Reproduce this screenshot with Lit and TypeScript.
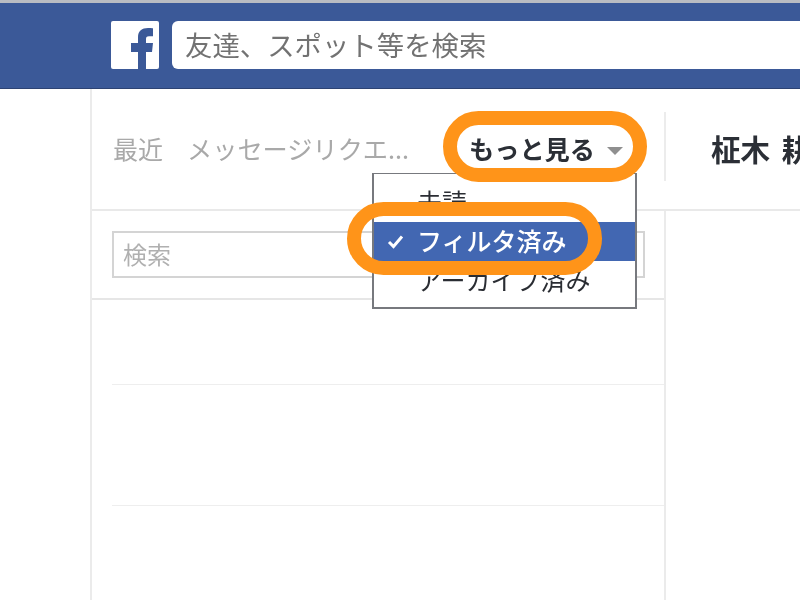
import { LitElement, html, css } from "lit";
import { customElement } from "lit/decorators.js";

@customElement("app-root")
export class AppRoot extends LitElement {
  static styles = css`
    :host {
      display: block;
      position: relative;
      width: 800px;
      height: 600px;
      overflow: hidden;
      background: #fff;
      font-family: "Noto Sans CJK JP", "Liberation Sans", sans-serif;
      font-size: 25px;
    }
    .page { display: flex; flex-direction: column; height: 600px; filter: blur(0.6px); }
    .topbar {
      box-sizing: border-box;
      height: 89px;
      flex: none;
      background: #3b5998;
      border-top: 3px solid #b9bcc2;
      border-bottom: 1px solid #2d4373;
      padding: 18px 0 0 111px;
      display: flex;
      gap: 13px;
      align-items: flex-start;
    }
    .logo {
      width: 48px;
      height: 48px;
      flex: none;
      background: #fff;
      border-radius: 2px;
      display: block;
    }
    .search {
      box-sizing: border-box;
      flex: 1;
      height: 48px;
      margin-right: -10px;
      background: #fff;
      border-radius: 6px 0 0 6px;
      padding-left: 13px;
      font-size: 27.4px;
      line-height: 46px;
      color: #727272;
      white-space: nowrap;
    }
    .main { flex: 1; display: flex; padding-left: 90px; min-height: 0; }
    .list {
      width: 576px;
      flex: none;
      box-sizing: border-box;
      border-left: 2px solid #ebebeb;
      border-right: 2px solid #ebebeb;
      display: flex;
      flex-direction: column;
    }
    .tabs {
      box-sizing: border-box;
      height: 122px;
      flex: none;
      margin-right: -2px;
      border-bottom: 2px solid #e9e9e9;
      background: #fff;
      display: flex;
      align-items: flex-start;
      padding: 41px 0 0 21px;
      line-height: 36px;
      color: #a9a9a9;
      white-space: nowrap;
    }
    .tabs .req { margin-left: 24px; font-size: 25.2px; }
    .tabs .more {
      margin-left: 60px;
      color: #2b2f36;
      font-weight: 700;
      font-size: 25.2px;
      display: flex;
      align-items: center;
      gap: 12px;
    }
    .caret {
      width: 0;
      height: 0;
      border-left: 8px solid transparent;
      border-right: 8px solid transparent;
      border-top: 8px solid #8f8f8f;
      margin-top: 5px;
    }
    .filter {
      box-sizing: border-box;
      height: 89px;
      flex: none;
      padding: 20px 19px 0 20px;
      border-bottom: 2px solid #e6e6e6;
    }
    .field {
      box-sizing: border-box;
      height: 47px;
      border: 2px solid #d4d4d4;
      padding-left: 9px;
      font-size: 24px;
      line-height: 41px;
      color: #b0b0b0;
    }
    .rows { flex: 1; padding-left: 20px; display: flex; flex-direction: column; }
    .row { height: 121px; flex: none; box-sizing: border-box; border-bottom: 1px solid #eeeeee; }
    .row:first-child { height: 85px; }
    .row:last-child { border-bottom: 0; }
    .detail { flex: 1; min-width: 0; display: flex; flex-direction: column; }
    .head {
      box-sizing: border-box;
      height: 122px;
      border-bottom: 2px solid #e9e9e9;
      padding: 38px 0 0 47px;
      font-size: 29.5px;
      line-height: 42px;
      font-weight: 700;
      word-spacing: 5px;
      color: #2b2f36;
      white-space: nowrap;
      background: #fff;
      margin-left: -2px;
      position: relative;
    }
    .head::before {
      content: "";
      position: absolute;
      left: 0;
      top: 23px;
      height: 69px;
      width: 2px;
      background: #ececec;
    }
    .menu {
      position: absolute;
      left: 372px;
      top: 173px;
      box-sizing: border-box;
      width: 265px;
      height: 136px;
      background: #fff;
      border: 2px solid #77797e;
      border-top-width: 1px;
      padding-top: 9px;
      color: #2a2d33;
      filter: blur(0.6px);
      line-height: 36px;
    }
    .item { height: 39px; padding-left: 43px; white-space: nowrap; position: relative; }
    .item.on { background: #4267b2; color: #fff; font-weight: 500; }
    .check { position: absolute; left: 13px; top: 12px; width: 17px; height: 15px; }
    .ring {
      position: absolute;
      box-sizing: border-box;
      border: 14px solid #ff9419;
      border-radius: 40px;
      filter: blur(0.4px);
    }
    .ring.a { left: 443px; top: 111px; width: 204px; height: 71px; }
    .ring.b { left: 347px; top: 202px; width: 255px; height: 73px; }
  `;

  render() {
    return html`
      <div class="page">
        <div class="topbar">
          <svg class="logo" viewBox="0 0 48 48" aria-label="Facebook">
            <path fill="#3b5998" d="M27 48V31h-7v-9h7v-6c0-6 4-9 10-9 2 0 4 .2 5 .3v8h-4c-2.500 0-3 1-3 3V22h7l-1 9h-6v17z"/>
          </svg>
          <div class="search">友達、スポット等を検索</div>
        </div>
        <div class="main">
          <div class="list">
            <div class="tabs">
              <span>最近</span>
              <span class="req">メッセージリクエ...</span>
              <span class="more">もっと見る<i class="caret"></i></span>
            </div>
            <div class="filter"><div class="field">検索</div></div>
            <div class="rows">
              <div class="row"></div>
              <div class="row"></div>
              <div class="row"></div>
            </div>
          </div>
          <div class="detail">
            <div class="head">柾木 耕</div>
          </div>
        </div>
      </div>
      <div class="menu">
        <div class="item">未読</div>
        <div class="item on">
          <svg class="check" viewBox="0 0 17 15"><path d="M2 8l4.500 4.500L15 2.500" fill="none" stroke="#fff" stroke-width="3"/></svg>
          フィルタ済み
        </div>
        <div class="item">アーカイブ済み</div>
      </div>
      <div class="ring a"></div>
      <div class="ring b"></div>
    `;
  }
}
